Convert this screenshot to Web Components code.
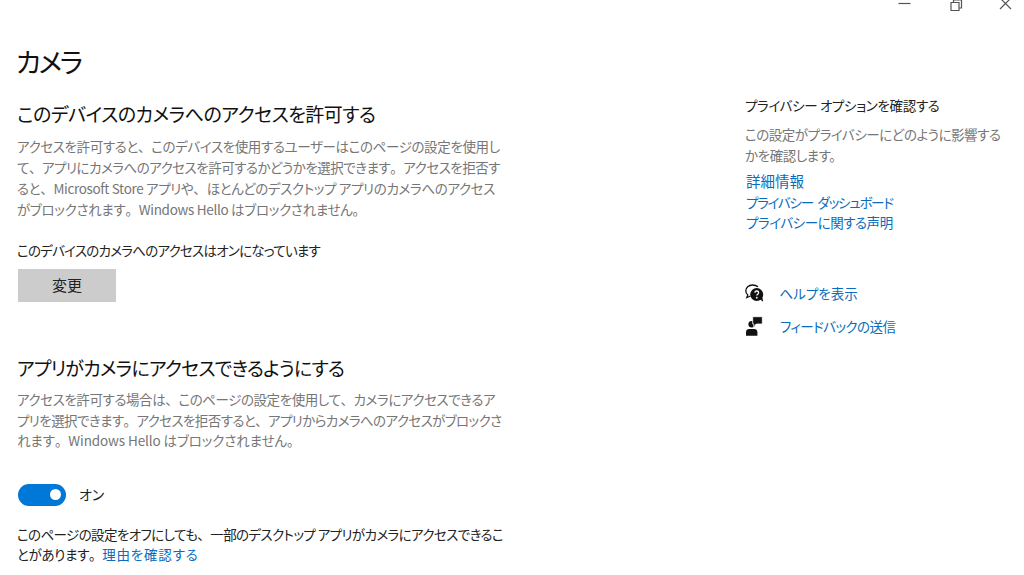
<!DOCTYPE html>
<html lang="ja">
<head>
<meta charset="utf-8">
<title>カメラ</title>
<style>
  html, body { margin: 0; height: 575px; overflow: hidden; background: #fff; }
  body {
    font-family: "Noto Sans CJK JP", "Open Sans", sans-serif;
    font-feature-settings: "palt";
    color: #000;
  }
</style>
</head>
<body>
<settings-page>
  <caption-bar></caption-bar>
  <camera-main></camera-main>
  <side-panel></side-panel>
</settings-page>

<script>
class SettingsPage extends HTMLElement {
  connectedCallback() {
    this.attachShadow({ mode: 'open' });
    this.shadowRoot.innerHTML = `
      <style>
        :host {
          display: grid;
          grid-template-columns: 745px 1fr;
          grid-template-rows: 36px 1fr;
          width: 1024px;
          height: 575px;
        }
        ::slotted(caption-bar) { grid-column: 1 / 3; }
      </style>
      <slot></slot>
    `;
  }
}

class CaptionBar extends HTMLElement {
  connectedCallback() {
    this.attachShadow({ mode: 'open' });
    this.shadowRoot.innerHTML = `
      <style>
        :host { display: flex; justify-content: flex-end; height: 36px; align-items: flex-start; }
        svg { display: block; width: 50px; height: 12px; margin-top: -1px; fill: none; stroke: #555; stroke-width: 1.2; }
        .close { margin-right: -6px; }
      </style>
      <svg viewBox="0 0 50 12"><path d="M18.500 4.500h12"/></svg>
      <svg viewBox="0 0 50 12"><path d="M21 3.500h8v8h-8zM23.500 3.500v-2.500h8v8h-2.500"/></svg>
      <svg class="close" viewBox="0 0 50 12"><path d="M20 -1l11 11M31 -1l-11 11"/></svg>
    `;
  }
}

// gray or dark paragraph, each <b> child is one line with its own tracking
class TextLines extends HTMLElement {
  connectedCallback() {
    this.attachShadow({ mode: 'open' });
    this.shadowRoot.innerHTML = `
      <style>
        :host {
          display: block;
          font-size: 13.500px;
          line-height: 21px;
          letter-spacing: var(--track, -0.4px);
          color: var(--text, #767676);
          white-space: nowrap;
        }
        ::slotted(b) { display: block; font-weight: 400; }
      </style>
      <slot></slot>
    `;
  }
}

class SectionHeading extends HTMLElement {
  connectedCallback() {
    this.attachShadow({ mode: 'open' });
    this.shadowRoot.innerHTML = `
      <style>
        :host { display: block; font-size: 19px; line-height: 28px; letter-spacing: var(--track, -0.5px); color: #111; white-space: nowrap; }
      </style>
      <slot></slot>
    `;
  }
}

class ToggleSwitch extends HTMLElement {
  connectedCallback() {
    this.attachShadow({ mode: 'open' });
    this.shadowRoot.innerHTML = `
      <style>
        :host { display: flex; align-items: center; gap: 13px; font-size: 14px; line-height: 21px; color: #222; }
        .track {
          width: 48px; height: 22px; box-sizing: border-box; border-radius: 11px;
          background: #0078d7; display: flex; justify-content: flex-end; align-items: center; padding-right: 5px;
        }
        .knob { width: 11px; height: 11px; border-radius: 50%; background: #fff; }
      </style>
      <div class="track"><div class="knob"></div></div>
      <slot></slot>
    `;
  }
}

class CameraMain extends HTMLElement {
  connectedCallback() {
    this.attachShadow({ mode: 'open' });
    this.shadowRoot.innerHTML = `
      <style>
        :host { display: block; padding-left: 17px; }
        h1 { margin: 6px 0 0 -1px; font-size: 27px; font-weight: 400; line-height: 40px; letter-spacing: -2.500px; color: #111; }
        section-heading.first { margin-top: 18px; }
        text-lines.desc { margin-top: 8px; }
        .status { margin-top: 20px; }
        button {
          display: block; margin: 8px 0 0 1px; width: 98px; height: 33px; border: 0; padding: 0 0 2px;
          background: #ccc; font: inherit; font-size: 15px; color: #222;
        }
        section-heading.second { margin-top: 52px; --track: -0.800px; }
        text-lines.second { margin-top: 7px; line-height: 20.500px; }
        toggle-switch { margin: 33px 0 0 1px; }
        .note { margin-top: 18px; line-height: 20px; }
        i { font-style: normal; font-feature-settings: normal; }
        a { color: #0a6cbc; text-decoration: none; letter-spacing: 0.800px; }
      </style>
      <h1>カメラ</h1>
      <section-heading class="first">このデバイスのカメラへのアクセスを許可する</section-heading>
      <text-lines class="desc">
        <b style="letter-spacing:-0.37px">アクセスを許可すると<i>、</i>このデバイスを使用するユーザーはこのページの設定を使用し</b>
        <b style="letter-spacing:-0.5px">て<i>、</i>アプリにカメラへのアクセスを許可するかどうかを選択できます<i>。</i>アクセスを拒否す</b>
        <b style="letter-spacing:-0.35px">ると<i>、</i>Microsoft Store アプリや<i>、</i>ほとんどのデスクトップ アプリのカメラへのアクセス</b>
        <b style="letter-spacing:-0.3px">がブロックされます<i>。</i>Windows Hello はブロックされません<i>。</i></b>
      </text-lines>
      <text-lines class="status" style="--text:#222;--track:-0.75px">このデバイスのカメラへのアクセスはオンになっています</text-lines>
      <button>変更</button>
      <section-heading class="second">アプリがカメラにアクセスできるようにする</section-heading>
      <text-lines class="desc second">
        <b style="letter-spacing:-0.42px">アクセスを許可する場合は<i>、</i>このページの設定を使用して<i>、</i>カメラにアクセスできるア</b>
        <b style="letter-spacing:-0.6px">プリを選択できます<i>。</i>アクセスを拒否すると<i>、</i>アプリからカメラへのアクセスがブロックさ</b>
        <b style="letter-spacing:-0.1px">れます<i>。</i>Windows Hello はブロックされません<i>。</i></b>
      </text-lines>
      <toggle-switch>オン</toggle-switch>
      <text-lines class="note" style="--text:#222">
        <b style="letter-spacing:-0.6px">このページの設定をオフにしても<i>、</i>一部のデスクトップ アプリがカメラにアクセスできるこ</b>
        <b style="letter-spacing:-0.35px">とがあります<i>。</i><a href="#">理由を確認する</a></b>
      </text-lines>
    `;
  }
}

class SidePanel extends HTMLElement {
  connectedCallback() {
    this.attachShadow({ mode: 'open' });
    this.shadowRoot.innerHTML = `
      <style>
        :host { display: block; font-size: 13.500px; line-height: 21px; white-space: nowrap; }
        .title { margin-top: 59px; color: #222; letter-spacing: -0.35px; }
        .desc { margin-top: 8px; color: #767676; letter-spacing: -0.45px; }
        .links { margin-top: 5px; margin-left: 1px; display: flex; flex-direction: column; line-height: 20.500px; }
        a { color: #0a6cbc; text-decoration: none; }
        .info { font-size: 14.500px; }
        .dash { letter-spacing: -1.250px; word-spacing: 3px; }
        .decl { letter-spacing: -0.450px; }
        .send { letter-spacing: -0.550px; }
        .row { display: flex; align-items: center; gap: 16px; height: 33px; }
        .help { margin-top: 44px; }
        svg { display: block; width: 19px; height: 19px; flex: none; overflow: visible; }
        .help a { margin-left: -0.500px; }
      </style>
      <div class="title">プライバシー オプションを確認する</div>
      <div class="desc">この設定がプライバシーにどのように影響する<br>かを確認します。</div>
      <div class="links">
        <a class="info" href="#">詳細情報</a>
        <a class="dash" href="#">プライバシー ダッシュボード</a>
        <a class="decl" href="#">プライバシーに関する声明</a>
      </div>
      <div class="row help">
        <svg viewBox="0 0 19 19">
          <path d="M13 2.800C11.500 1.500 9.500 1 7.500 1 3.500 1 .8 3.500.8 6.800c0 1.800.8 3.200 2 4.200L1.800 13.500 5.500 12" fill="none" stroke="#111" stroke-width="1.300"/>
          <circle cx="11.700" cy="10.500" r="6.500" fill="#111"/>
          <path d="M14.500 15l3.700 2.700-1-5z" fill="#111"/>
          <path d="M9.900 8.800c0-2.400 3.700-2.400 3.700 0 0 1.500-1.800 1.300-1.800 2.800" fill="none" stroke="#fff" stroke-width="1.300"/>
          <circle cx="11.800" cy="13.700" r=".9" fill="#fff"/>
        </svg>
        <a href="#">ヘルプを表示</a>
      </div>
      <div class="row">
        <svg viewBox="0 0 19 19" fill="#111">
          <circle cx="6.700" cy="7.200" r="3.300"/>
          <path d="M1 18.700v-3.500c0-2 1.500-3.200 3-3.200h5.400c1.500 0 3 1.200 3 3.200v3.500z"/>
          <path d="M7.700-.3h9.600v7.300h-6L8.800 9.700V7H7.700z" stroke="#fff" stroke-width=".8"/>
        </svg>
        <a class="send" href="#">フィードバックの送信</a>
      </div>
    `;
  }
}

customElements.define('settings-page', SettingsPage);
customElements.define('caption-bar', CaptionBar);
customElements.define('text-lines', TextLines);
customElements.define('section-heading', SectionHeading);
customElements.define('toggle-switch', ToggleSwitch);
customElements.define('camera-main', CameraMain);
customElements.define('side-panel', SidePanel);
</script>
</body>
</html>
